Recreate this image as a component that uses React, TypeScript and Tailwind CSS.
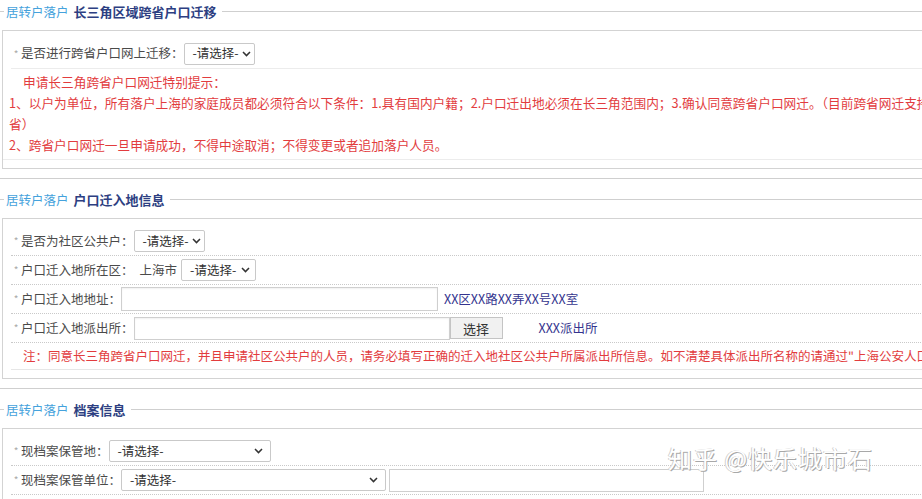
import type { ReactNode } from 'react';

function Chevron() {
  return (
    <svg width="9" height="6" viewBox="0 0 9 6" className="shrink-0 ml-[3px]">
      <polyline points="1,1 4.5,4.6 8,1" fill="none" stroke="#333" strokeWidth="1.5" />
    </svg>
  );
}

function FakeSelect({ className }: { className: string }) {
  return (
    <div
      className={`h-[22px] border border-[#c9c9c9] rounded-[2px] bg-white flex items-center justify-between pl-[8px] pr-[5px] text-[12.5px] text-[#333] leading-none whitespace-nowrap shrink-0 ${className}`}
    >
      <span>-请选择-</span>
      <Chevron />
    </div>
  );
}

function Legend({ title }: { title: string }) {
  return (
    <div className="flex items-center h-[20px]">
      <div className="w-[4px] h-px bg-[#cfcfcf]" />
      <div className="px-[2px] leading-[20px] whitespace-nowrap">
        <span className="text-[12.5px] text-[#45a2dc]">居转户落户</span>
        <span className="ml-[5px] text-[13px] font-semibold text-[#2d3f82]">{title}</span>
      </div>
      <div className="flex-1 h-px bg-[#cfcfcf] ml-[3px]" />
    </div>
  );
}

function Row({ label, children, last }: { label: string; children?: ReactNode; last?: boolean }) {
  return (
    <div
      className={`flex items-center h-[29px] ${last ? 'border-b border-[#e6e6e6]' : 'border-b border-dotted border-[#c9c9c9]'}`}
    >
      <span className="w-[10px] text-center text-[10px] text-[#aaa] leading-none">*</span>
      <span className="text-[12.5px] text-[#4a4a4a] whitespace-nowrap">{label}：</span>
      {children}
    </div>
  );
}

export default function App() {
  return (
    <div className="relative w-[922px] h-[499px] overflow-hidden bg-white font-['Noto_Sans_CJK_SC','Microsoft_YaHei',sans-serif]">
      <div className="w-[1100px]">
        {/* 长三角区域跨省户口迁移 */}
        <section className="pt-[1px] mb-[9px]">
          <Legend title="长三角区域跨省户口迁移" />
          <div className="mt-[9px] ml-[2px] border border-[#d3d3d3] pt-[8px] pb-[8px]">
            <div className="ml-[8px] flex items-center h-[30px] border-b border-[#ececec]">
              <span className="w-[10px] text-center text-[10px] text-[#aaa] leading-none">*</span>
              <span className="text-[12.5px] text-[#4a4a4a] whitespace-nowrap">是否进行跨省户口网上迁移：</span>
              <FakeSelect className="w-[71px]" />
            </div>
            <div className="pl-[6px] pt-[2px] pb-[4px] border-b border-[#ececec] text-[12.7px] leading-[21px] text-[#e23c3e] whitespace-nowrap">
              <p className="pl-[14px]">申请长三角跨省户口网迁特别提示：</p>
              <p>
                1、以户为单位，所有落户上海的家庭成员都必须符合以下条件：1.具有国内户籍；2.户口迁出地必须在长三角范围内；3.确认同意跨省户口网迁。（目前跨省网迁支持苏浙皖三
              </p>
              <p>省）</p>
              <p>2、跨省户口网迁一旦申请成功，不得中途取消；不得变更或者追加落户人员。</p>
            </div>
          </div>
        </section>

        {/* 户口迁入地信息 */}
        <section className="border-t border-[#cfcfcf] pt-[10px] mb-[9px]">
          <Legend title="户口迁入地信息" />
          <div className="mt-[9px] ml-[2px] border border-[#d3d3d3] pt-[8px] pb-[8px]">
            <div className="ml-[8px]">
              <Row label="是否为社区公共户">
                <FakeSelect className="w-[71px]" />
              </Row>
              <Row label="户口迁入地所在区">
                <span className="ml-[6px] text-[12.5px] text-[#4a4a4a]">上海市</span>
                <FakeSelect className="ml-[4px] w-[75px]" />
              </Row>
              <Row label="户口迁入地地址">
                <div className="w-[317px] h-[24px] border border-[#cfcfcf] bg-white shadow-[inset_0_1px_2px_rgba(0,0,0,0.06)]" />
                <span className="ml-[6px] text-[12.5px] text-[#34348e]">XX区XX路XX弄XX号XX室</span>
              </Row>
              <Row label="户口迁入地派出所">
                <div className="w-[316px] h-[23px] border border-[#cfcfcf] bg-white shadow-[inset_0_1px_2px_rgba(0,0,0,0.06)]" />
                <button className="w-[53px] h-[22px] border border-[#c4c4c4] bg-[#f1f1f1] text-[13px] text-[#333] leading-none">
                  选择
                </button>
                <span className="ml-[36px] text-[12.5px] text-[#34348e]">XXX派出所</span>
              </Row>
              <div className="h-[27px] flex items-center pl-[12px] border-b border-[#e6e6e6] text-[12.5px] text-[#e23c3e] whitespace-nowrap">
                注：同意长三角跨省户口网迁，并且申请社区公共户的人员，请务必填写正确的迁入地社区公共户所属派出所信息。如不清楚具体派出所名称的请通过"上海公安人口管理"查询。
              </div>
            </div>
          </div>
        </section>

        {/* 档案信息 */}
        <section className="border-t border-[#cfcfcf] pt-[10px]">
          <Legend title="档案信息" />
          <div className="mt-[9px] ml-[2px] border border-[#d3d3d3] pt-[8px] pb-[8px]">
            <div className="ml-[8px]">
              <Row label="现档案保管地">
                <FakeSelect className="w-[162px] pr-[7px]" />
              </Row>
              <Row label="现档案保管单位">
                <FakeSelect className="w-[265px] pr-[7px]" />
                <div className="ml-[3px] w-[315px] h-[23px] border border-[#cfcfcf] bg-white" />
              </Row>
            </div>
          </div>
        </section>
      </div>

      <div className="absolute left-[668px] top-[446px] text-[24px] leading-none tracking-[1px] text-white whitespace-nowrap [text-shadow:1px_1px_0_#a8a8a8,-1px_0_0_#cfcfcf]">
        知乎 @快乐城市石
      </div>
    </div>
  );
}
